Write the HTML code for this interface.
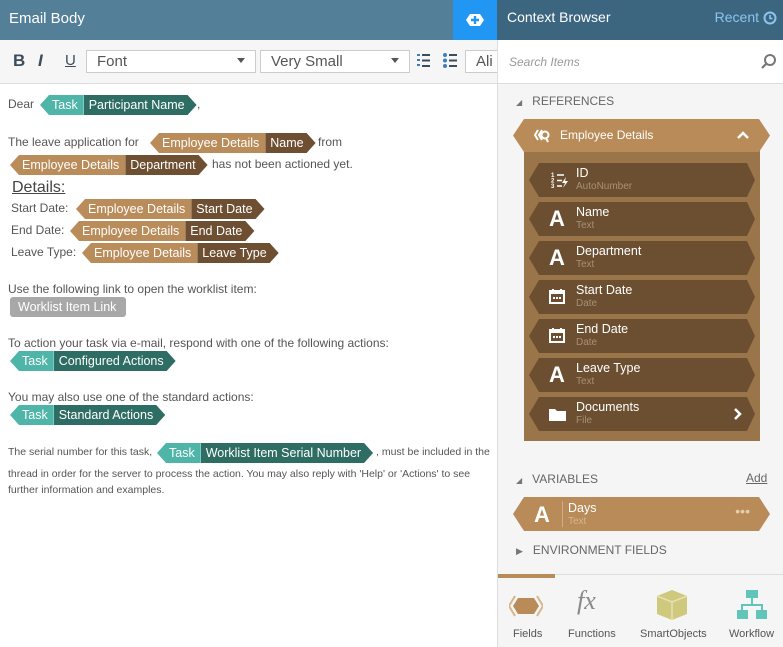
<!DOCTYPE html>
<html><head><meta charset="utf-8"><style>
*{box-sizing:border-box;margin:0;padding:0}
body{width:783px;height:647px;position:relative;overflow:hidden;background:#fff;font-family:"Liberation Sans",sans-serif;color:#555;font-size:12px}
.a{position:absolute;white-space:nowrap}
.hdrL{position:absolute;left:0;top:0;width:460px;height:40px;background:#537f98;color:#fff;font-size:15px;padding:10px 9px}
.plus{position:absolute;left:453px;top:0;width:44px;height:40px;background:#2196f3}
.hdrR{position:absolute;left:497px;top:0;width:286px;height:40px;background:#3c6680;color:#fff;font-size:14px;padding:9px 10px}
.tb{position:absolute;left:0;top:40px;width:497px;height:44px;background:#f6f6f6;border-bottom:1px solid #ddd}
.sel{position:absolute;top:50px;height:23px;border:1px solid #ccc;background:#fff;font-size:15px;color:#555;padding:2px 10px}
.chip{position:absolute;display:flex;height:20px;font-size:12.5px;color:#fff;line-height:20px}
.chip span{display:block;white-space:nowrap}
.l{clip-path:polygon(9px 0,100% 0,100% 100%,9px 100%,0 50%);padding:0 6px 0 12px}
.r{clip-path:polygon(0 0,calc(100% - 9px) 0,100% 50%,calc(100% - 9px) 100%,0 100%);padding:0 12px 0 5px}
.tl{background:#4eb5a8}.td{background:#2e6d63}.bl{background:#b98c5a}.bd{background:#6e4f31}
.right{position:absolute;left:497px;top:40px;width:286px;height:607px;background:#f5f5f5;border-left:1px solid #ddd}
.item{position:absolute;left:529px;width:226px;height:34px;background:#6c4f31;clip-path:polygon(10px 0,calc(100% - 8px) 0,100% 50%,calc(100% - 8px) 100%,10px 100%,0 50%);color:#fff}
.item .t{position:absolute;left:47px;top:3px;font-size:12.5px}
.item .s{position:absolute;left:47px;top:18px;font-size:10px;color:#a88f74}
.item .i{position:absolute;left:20px;top:5px;font-size:22px;font-weight:bold;line-height:24px}
.sec{position:absolute;left:516px;font-size:12px;color:#666}
</style></head><body>
<div class="hdrL">Email Body</div>
<div class="plus"><svg width="44" height="40"><polygon points="13,20 17,14 27,14 31,20 27,26 17,26" fill="#fff"/><path d="M22 16v8M18 20h8" stroke="#2196f3" stroke-width="2.4"/></svg></div>
<div class="hdrR">Context Browser<span style="position:absolute;right:24px;top:9px;color:#8cc4ee">Recent</span><svg style="position:absolute;right:6px;top:11px" width="14" height="14"><circle cx="7" cy="7" r="5.5" fill="none" stroke="#8cc4ee" stroke-width="2"/><path d="M7 4v3.5h2.5" stroke="#8cc4ee" stroke-width="1.6" fill="none"/></svg></div>
<div class="tb"></div>
<div class="a" style="left:13px;top:51px;font-size:17px;font-weight:bold;color:#3d4d5a">B</div>
<div class="a" style="left:38px;top:51px;font-size:17px;font-style:italic;font-weight:bold;color:#3d4d5a">I</div>
<div class="a" style="left:65px;top:52px;font-size:15px;text-decoration:underline;color:#3d4d5a">U</div>
<div class="sel" style="left:86px;width:170px">Font<span style="position:absolute;right:10px;top:7px;border:4px solid transparent;border-top:5px solid #555"></span></div>
<div class="sel" style="left:260px;width:150px">Very Small<span style="position:absolute;right:10px;top:7px;border:4px solid transparent;border-top:5px solid #555"></span></div>
<svg class="a" style="left:417px;top:53px" width="44" height="16"><g fill="#3a7fc1"><rect x="0" y="1" width="3" height="2"/><rect x="0" y="6" width="3" height="2"/><rect x="0" y="11" width="3" height="2"/><circle cx="28" cy="2" r="2"/><circle cx="28" cy="7.5" r="2"/><circle cx="28" cy="13" r="2"/></g><g fill="#3d4d5a"><rect x="5" y="1" width="8" height="2"/><rect x="5" y="6.5" width="8" height="2"/><rect x="5" y="12" width="8" height="2"/><rect x="32" y="1" width="8" height="2"/><rect x="32" y="6.5" width="8" height="2"/><rect x="32" y="12" width="8" height="2"/></g></svg>
<div class="sel" style="left:465px;width:40px">Ali</div>

<div class="a" style="left:8px;top:97px">Dear</div>
<div class="chip" style="left:40px;top:95px"><span class="l tl">Task</span><span class="r td">Participant Name</span></div>
<div class="a" style="left:197px;top:97px">,</div>

<div class="a" style="left:8px;top:135px">The leave application for</div>
<div class="chip" style="left:150px;top:133px"><span class="l bl">Employee Details</span><span class="r bd">Name</span></div>
<div class="a" style="left:318px;top:135px">from</div>
<div class="chip" style="left:10px;top:155px"><span class="l bl">Employee Details</span><span class="r bd">Department</span></div>
<div class="a" style="left:212px;top:157px">has not been actioned yet.</div>
<div class="a" style="left:12px;top:179px;font-size:16px;text-decoration:underline;color:#444">Details:</div>
<div class="a" style="left:11px;top:201px">Start Date:</div>
<div class="chip" style="left:76px;top:199px"><span class="l bl">Employee Details</span><span class="r bd">Start Date</span></div>
<div class="a" style="left:11px;top:223px">End Date:</div>
<div class="chip" style="left:70px;top:221px"><span class="l bl">Employee Details</span><span class="r bd">End Date</span></div>
<div class="a" style="left:11px;top:245px">Leave Type:</div>
<div class="chip" style="left:82px;top:243px"><span class="l bl">Employee Details</span><span class="r bd">Leave Type</span></div>

<div class="a" style="left:8px;top:282px">Use the following link to open the worklist item:</div>
<div class="a" style="left:10px;top:297px;width:116px;height:20px;background:#a8a8a8;border-radius:3px;color:#fff;font-size:12.5px;line-height:20px;padding-left:8px">Worklist Item Link</div>
<div class="a" style="left:8px;top:336px">To action your task via e-mail, respond with one of the following actions:</div>
<div class="chip" style="left:10px;top:351px"><span class="l tl">Task</span><span class="r td">Configured Actions</span></div>
<div class="a" style="left:8px;top:390px">You may also use one of the standard actions:</div>
<div class="chip" style="left:10px;top:405px"><span class="l tl">Task</span><span class="r td">Standard Actions</span></div>

<div class="a" style="left:8px;top:446px;font-size:10.5px">The serial number for this task,</div>
<div class="chip" style="left:157px;top:443px"><span class="l tl">Task</span><span class="r td">Worklist Item Serial Number</span></div>
<div class="a" style="left:376px;top:446px;font-size:10.5px">, must be included in the</div>
<div class="a" style="left:8px;top:468px;font-size:10.5px">thread in order for the server to process the action. You may also reply with 'Help' or 'Actions' to see</div>
<div class="a" style="left:8px;top:484px;font-size:10.5px">further information and examples.</div>

<div class="right"></div>
<div class="a" style="left:498px;top:40px;width:285px;height:44px;background:#fff;border-bottom:1px solid #ddd"></div>
<div class="a" style="left:509px;top:55px;font-style:italic;color:#999;font-size:12px">Search Items</div>
<svg class="a" style="left:760px;top:53px" width="18" height="18"><circle cx="10" cy="7" r="5" fill="none" stroke="#777" stroke-width="2"/><path d="M6.5 10.5L2 15" stroke="#777" stroke-width="2.2"/></svg>
<div class="sec" style="top:94px"><span style="font-size:8px;color:#777">◢</span>&nbsp;&nbsp; REFERENCES</div>
<div class="a" style="left:524px;top:150px;width:236px;height:291px;background:#9a7549"></div>
<div class="a" style="left:513px;top:119px;width:257px;height:33px;background:#b98b59;clip-path:polygon(11px 0,calc(100% - 11px) 0,100% 50%,calc(100% - 11px) 100%,11px 100%,0 50%);color:#fff;font-size:12px">
<svg style="position:absolute;left:21px;top:9px" width="16" height="15"><path d="M4 2L1 7l3 5M8 2L5 7l3 5" stroke="#fff" stroke-width="2" fill="none"/><circle cx="11" cy="7" r="3.5" fill="none" stroke="#fff" stroke-width="2"/><path d="M12 10l2 4" stroke="#fff" stroke-width="2"/></svg><span style="position:absolute;left:47px;top:9px">Employee Details</span><svg style="position:absolute;right:20px;top:11px" width="14" height="10"><path d="M2 8l5-5 5 5" stroke="#fff" stroke-width="2.5" fill="none"/></svg></div>
<div class="item" style="top:163px"><svg style="position:absolute;left:22px;top:9px" width="18" height="17"><text x="0" y="5" font-size="6" fill="#fff" font-family="Liberation Sans" font-weight="bold">1</text><text x="0" y="10.5" font-size="6" fill="#fff" font-family="Liberation Sans" font-weight="bold">2</text><text x="0" y="16" font-size="6" fill="#fff" font-family="Liberation Sans" font-weight="bold">3</text><path d="M6 3h7M6 8.5h5M6 14h5" stroke="#fff" stroke-width="1.5"/><path d="M15 5l-4 6h3l-2 5 5-7h-3z" fill="#fff"/></svg><span class="t">ID</span><span class="s">AutoNumber</span></div>
<div class="item" style="top:202px"><span class="i">A</span><span class="t">Name</span><span class="s">Text</span></div>
<div class="item" style="top:241px"><span class="i">A</span><span class="t">Department</span><span class="s">Text</span></div>
<div class="item" style="top:280px"><svg class="i" style="top:8px" width="16" height="16"><rect x="1" y="3" width="14" height="12" fill="none" stroke="#fff" stroke-width="2"/><rect x="1" y="3" width="14" height="3" fill="#fff"/><g fill="#fff"><rect x="4" y="9" width="2" height="2"/><rect x="7" y="9" width="2" height="2"/><rect x="10" y="9" width="2" height="2"/></g><path d="M4 1v3M12 1v3" stroke="#fff" stroke-width="2"/></svg><span class="t">Start Date</span><span class="s">Date</span></div>
<div class="item" style="top:319px"><svg class="i" style="top:8px" width="16" height="16"><rect x="1" y="3" width="14" height="12" fill="none" stroke="#fff" stroke-width="2"/><rect x="1" y="3" width="14" height="3" fill="#fff"/><g fill="#fff"><rect x="4" y="9" width="2" height="2"/><rect x="7" y="9" width="2" height="2"/><rect x="10" y="9" width="2" height="2"/></g><path d="M4 1v3M12 1v3" stroke="#fff" stroke-width="2"/></svg><span class="t">End Date</span><span class="s">Date</span></div>
<div class="item" style="top:358px"><span class="i">A</span><span class="t">Leave Type</span><span class="s">Text</span></div>
<div class="item" style="top:397px"><svg class="i" style="top:10px" width="17" height="14"><path d="M0 2h6l2 2h9v10H0z" fill="#fff"/></svg><span class="t">Documents</span><span class="s">File</span><svg style="position:absolute;right:12px;top:10px" width="10" height="14"><path d="M2 2l5 5-5 5" stroke="#fff" stroke-width="2.5" fill="none"/></svg></div>

<div class="sec" style="top:472px"><span style="font-size:8px;color:#777">◢</span>&nbsp;&nbsp; VARIABLES</div>
<div class="a" style="left:746px;top:471px;color:#666;text-decoration:underline">Add</div>
<div class="a" style="left:513px;top:497px;width:257px;height:34px;background:#b98b59;clip-path:polygon(11px 0,calc(100% - 11px) 0,100% 50%,calc(100% - 11px) 100%,11px 100%,0 50%);color:#fff">
<span style="position:absolute;left:21px;top:5px;font-size:22px;font-weight:bold">A</span><span style="position:absolute;left:49px;top:4px;width:1px;height:26px;background:#d0ae85"></span><span style="position:absolute;left:55px;top:4px;font-size:12.5px">Days</span><span style="position:absolute;left:55px;top:19px;font-size:10px;color:#d6b68e">Text</span><span style="position:absolute;right:20px;top:6px;font-size:14px;color:#e5cdb0">•••</span></div>
<div class="sec" style="top:543px"><span style="font-size:9px;color:#777">▶</span>&nbsp;&nbsp; ENVIRONMENT FIELDS</div>

<div class="a" style="left:498px;top:574px;width:285px;height:1px;background:#ddd"></div>
<div class="a" style="left:498px;top:574px;width:57px;height:4px;background:#b98b59"></div>
<svg class="a" style="left:509px;top:592px" width="34" height="28"><polygon points="9,6 25,6 30,14 25,22 9,22 4,14" fill="#b98b59"/><path d="M6 4L0 14l6 10M28 4l6 10-6 10" stroke="#d9b68a" stroke-width="2" fill="none"/></svg>
<div class="a" style="left:577px;top:586px;font-family:'Liberation Serif',serif;font-style:italic;font-size:26px;color:#888">fx</div>
<svg class="a" style="left:656px;top:589px" width="32" height="32"><polygon points="16,1 31,7 31,25 16,31 1,25 1,7" fill="#cfc97e"/><path d="M1 7l15 6 15-6M16 13v18" stroke="#e6e1b0" stroke-width="1.5" fill="none"/></svg>
<svg class="a" style="left:736px;top:589px" width="32" height="32"><g fill="#62c5b9"><rect x="10" y="1" width="12" height="8"/><rect x="1" y="21" width="11" height="9"/><rect x="20" y="21" width="11" height="9"/></g><path d="M16 9v6M6 21v-5h20v5" stroke="#62c5b9" stroke-width="2" fill="none"/></svg>
<div class="a" style="left:513px;top:628px;font-size:11px;color:#555">Fields</div>
<div class="a" style="left:568px;top:628px;font-size:11px;color:#555">Functions</div>
<div class="a" style="left:640px;top:628px;font-size:11px;color:#555">SmartObjects</div>
<div class="a" style="left:729px;top:628px;font-size:11px;color:#555">Workflow</div>
</body></html>
